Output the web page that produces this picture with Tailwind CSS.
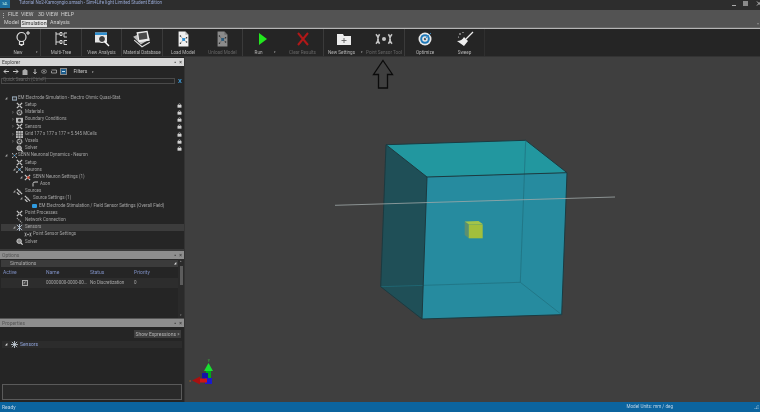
<!DOCTYPE html>
<html lang="en">
<head>
  <meta charset="UTF-8" />
  <title>Sim4Life</title>
  <script src="https://cdn.jsdelivr.net/npm/@tailwindcss/browser@4"></script>
</head>
<body class="w-[760px] h-[412px] overflow-hidden bg-[#3f3f3f] font-['Roboto',sans-serif] text-[5px] leading-none text-[#a9a9a9]">
  <svg class="absolute w-0 h-0">
    <defs>
      <symbol id="cross" viewBox="0 0 8 8"><path d="M1 1l6 6M7 1L1 7" stroke="#c8c8c8" stroke-width="1.500" fill="none"/><circle cx="4" cy="4" r="1" fill="#777"/></symbol>
      <symbol id="gear" viewBox="0 0 8 8"><circle cx="4" cy="4" r="2.600" fill="none" stroke="#c4c4c4" stroke-width="1.600" stroke-dasharray="1.300 .5"/><circle cx="4" cy="4" r="1" fill="#777"/></symbol>
      <symbol id="net" viewBox="0 0 8 8"><path d="M1 1l3 3 3-3M1 7l3-3 3 3" stroke="#bbb" stroke-width=".7" fill="none"/><circle cx="4" cy="4" r="1.200" fill="#4a9fd8"/><circle cx="1" cy="1" r=".9" fill="#ccc"/><circle cx="7" cy="1" r=".9" fill="#ccc"/><circle cx="1" cy="7" r=".9" fill="#ccc"/><circle cx="7" cy="7" r=".9" fill="#ccc"/></symbol>
      <symbol id="solver" viewBox="0 0 8 8"><circle cx="3.600" cy="3.600" r="2.600" fill="#8a8a8a" stroke="#ddd" stroke-width=".9"/><path d="M5.400 5.400L7.600 7.600" stroke="#ddd" stroke-width="1.300"/></symbol>
      <symbol id="lock" viewBox="0 0 6 6"><rect x=".6" y="2.200" width="4.800" height="3.400" fill="#d2d2d2"/><path d="M1.800 2.200V1.400Q3 .1 4.200 1.400V2.200" stroke="#d2d2d2" stroke-width=".7" fill="none"/></symbol>
      <symbol id="sensor" viewBox="0 0 10 6"><path d="M1 .6Q3.200 3 1 5.400M2.800 .6Q1 3 2.800 5.400M9 .6Q6.800 3 9 5.400M7.200 .6Q9 3 7.200 5.400" stroke="#c4c4c4" stroke-width=".8" fill="none"/><circle cx="5" cy="3" r="1" fill="#c4c4c4"/></symbol>
      <symbol id="model" viewBox="0 0 20 26"><path d="M2 1h11l5 5v19H2z" fill="#f1f1f1"/><path d="M13 1v5h5" fill="#b5b5b5"/><path d="M5 8l5 6 5-3M5 20l5-6 5 4" stroke="#777" stroke-width=".8" fill="none"/><rect x="8" y="11.500" width="4.500" height="4.500" fill="#2a8fd4"/><circle cx="5" cy="8" r="1.200" fill="#333"/><circle cx="15" cy="11" r="1.200" fill="#333"/><circle cx="5" cy="20" r="1.200" fill="#333"/><circle cx="15" cy="18" r="1.200" fill="#333"/></symbol>
    </defs>
  </svg>

  <div class="flex flex-col h-full">
    <!-- title bar -->
    <div class="flex h-[10px] bg-[#2d2d2d] text-[#97a8d4] shrink-0 blur-[0.25px]">
      <div class="w-[10px] h-[8px] bg-[#1d6f9f] text-[3px] text-[#cfe] flex items-center justify-center">S4L</div>
      <span class="ml-[9px] mt-[1px] text-[4.550px] whitespace-nowrap">Tutorial No2-Kamoyngio.smash - Sim4Life light Limited Student Edition</span>
      <div class="ml-auto flex items-start">
        <div class="w-[4px] h-[1px] bg-[#aaa] mt-[5px]"></div>
        <div class="ml-[7px] mt-[1px] w-[5px] h-[5px] bg-[#8a8a8a]"></div>
        <svg class="ml-[8px] mt-[1px]" width="4" height="5" viewBox="0 0 4 5"><path d="M1 0.500l4 4M5 .5l-4 4" stroke="#bbb"/></svg>
      </div>
    </div>

    <!-- menu + tabs -->
    <div class="h-[18px] bg-[#535353] flex flex-col shrink-0 blur-[0.25px]">
      <div class="flex items-center h-[10px] text-[#d0d0d0] text-[5.300px]">
        <div class="ml-[3px] w-[1px] h-[5px] border-l border-dotted border-[#aaa]"></div>
        <span class="ml-[4px] w-[13px]">FILE</span><span class="w-[17px]">VIEW</span><span class="w-[23px]">3D VIEW</span><span>HELP</span>
      </div>
      <div class="flex items-end h-[8px] text-[5.300px] text-[#cfcfcf] border-b border-[#666]">
        <span class="ml-[4px] w-[17px] pb-[2px]">Model</span>
        <span class="w-[26px] h-[7px] bg-[#e2e2e2] text-[#333] flex items-center justify-center">Simulation</span>
        <span class="ml-[3px] pb-[2px]">Analysis</span>
        <span class="ml-auto mr-[1px] pb-[1px] text-[3.500px] text-[#888]">▾</span>
      </div>
    </div>
    <div class="h-[1px] bg-[#b5b5b5] shrink-0"></div>

    <!-- ribbon -->
    <div class="flex h-[28px] bg-[#252525] border-b border-[#333] text-[4.600px] text-[#b5b5b5] shrink-0 blur-[0.25px]">
      <div class="w-[41px] border-r border-[#3a3a3a] flex flex-col items-center relative">
        <svg class="h-[16px] mt-[2px] ml-[5px]" width="16" viewBox="0 0 16 16"><circle cx="6.500" cy="6" r="4.500" fill="none" stroke="#ddd" stroke-width="1.200"/><path d="M4.500 10.500h4v3h-4zM5.500 14.500h2" stroke="#ddd" stroke-width="1.200" fill="none"/><path d="M13 0v4M11 2h4" stroke="#eee" stroke-width="1"/></svg>
        <span class="mt-[4px] mr-[4px]">New</span>
        <span class="absolute right-[2px] bottom-[2px] text-[3px]">▾</span>
      </div>
      <div class="w-[41px] border-r border-[#3a3a3a] flex flex-col items-center">
        <svg class="h-[16px] mt-[2px]" width="18" viewBox="0 0 16 16"><path d="M3 1v13M3 3h4M3 11h4M7 1.500h2v3H7zM7 9.500h2v3H7zM11 2v4M14 2h-3M14 6h-3M11 9.500v4M14 9.500h-3M14 13.500h-3" stroke="#d8d8d8" stroke-width="1" fill="none"/></svg>
        <span class="mt-[4px]">Multi-Tree</span>
      </div>
      <div class="w-[40px] border-r border-[#3a3a3a] flex flex-col items-center">
        <svg class="h-[16px] mt-[2px]" width="16" viewBox="0 0 16 16"><rect x="1" y="1.500" width="12" height="10" fill="#e6e6e6"/><rect x="1" y="1.500" width="12" height="2.500" fill="#2f8fd0"/><circle cx="8" cy="8" r="3.500" fill="#3c3c3c" stroke="#fff" stroke-width="1"/><path d="M10.500 10.500L15 15" stroke="#fff" stroke-width="1.400"/></svg>
        <span class="mt-[4px]">View Analysis</span>
      </div>
      <div class="w-[41px] border-r border-[#3a3a3a] flex flex-col items-center">
        <svg class="h-[18px] mt-[1px]" width="20" viewBox="0 0 18 16"><path d="M1 6l9-4 6 6-8 5z" fill="#bcbcbc"/><path d="M4 2l10-1.500 2 9L6 11z" fill="#ececec"/><rect x="6" y="2.500" width="7.500" height="6" transform="rotate(-8 9 5)" fill="#4a4a4a"/><path d="M2 9l7 6 7-4" stroke="#ddd" fill="none"/></svg>
        <span class="mt-[3px] whitespace-nowrap">Material Database</span>
      </div>
      <div class="w-[40px] flex flex-col items-center">
        <svg class="h-[16px] mt-[2px]" width="13"><use href="#model"/></svg>
        <span class="mt-[4px]">Load Model</span>
      </div>
      <div class="w-[40px] border-r border-[#3a3a3a] flex flex-col items-center text-[#666]">
        <svg class="h-[16px] mt-[2px] opacity-50" width="13"><use href="#model"/></svg>
        <span class="mt-[4px]">Unload Model</span>
      </div>
      <div class="w-[39px] flex flex-col items-center relative">
        <svg class="h-[16px] mt-[2px]" width="10" viewBox="0 0 10 16"><path d="M1 2l8 6-8 6z" fill="#22e81e"/></svg>
        <span class="mt-[4px] mr-[8px]">Run</span>
        <span class="absolute right-[6px] bottom-[2px] text-[3px]">▾</span>
      </div>
      <div class="w-[42px] border-r border-[#3a3a3a] flex flex-col items-center text-[#666]">
        <svg class="h-[16px] mt-[2px]" width="14" viewBox="0 0 14 16"><path d="M2 2l10 12M12 2L2 14" stroke="#b01818" stroke-width="2"/></svg>
        <span class="mt-[4px]">Clear Results</span>
      </div>
      <div class="w-[40px] flex flex-col items-center relative">
        <svg class="h-[16px] mt-[2px]" width="16" viewBox="0 0 16 16"><path d="M1 3h6l1 2h7v9H1z" fill="#ececec"/><path d="M8 7v5M5.500 9.500h5" stroke="#555" stroke-width=".8"/></svg>
        <span class="mt-[4px] mr-[5px] whitespace-nowrap">New Settings</span>
        <span class="absolute right-[1px] bottom-[2px] text-[3px]">▾</span>
      </div>
      <div class="w-[41px] border-r border-[#3a3a3a] flex flex-col items-center text-[#666]">
        <svg class="h-[16px] mt-[2px]" width="20"><use href="#sensor"/></svg>
        <span class="mt-[4px] whitespace-nowrap">Point Sensor Tool</span>
      </div>
      <div class="w-[40px] flex flex-col items-center">
        <svg class="h-[16px] mt-[2px]" width="16" viewBox="0 0 16 16"><circle cx="8" cy="8" r="6.500" fill="#e8e8e8"/><circle cx="8" cy="8" r="4.800" fill="#1f79b8"/><circle cx="8" cy="8" r="2.800" fill="#e8e8e8"/><circle cx="8" cy="8" r="1.200" fill="#555"/><path d="M8 8l6-6" stroke="#3b8fc9" stroke-width=".9"/></svg>
        <span class="mt-[4px]">Optimize</span>
      </div>
      <div class="w-[40px] border-r border-[#2f2f2f] flex flex-col items-center">
        <svg class="h-[16px] mt-[2px]" width="18" viewBox="0 0 18 16"><path d="M17 1L10 8" stroke="#eee" stroke-width="1.200"/><path d="M8 6l4 4-4 5-7-5q5 0 7-4z" fill="#efefef"/><circle cx="4" cy="3" r=".8" fill="#ddd"/><circle cx="7" cy="1.500" r=".6" fill="#ddd"/><circle cx="2.500" cy="6" r=".6" fill="#ddd"/></svg>
        <span class="mt-[4px]">Sweep</span>
      </div>
    </div>

    <!-- main -->
    <div class="flex flex-1 min-h-0">
      <div class="w-[184px] flex flex-col bg-[#252525] pt-[1px] blur-[0.25px]">
        <!-- explorer -->
        <div class="h-[192px] flex flex-col">
          <div class="h-[8px] bg-[#d7d7d7] text-[#444] flex items-center pl-[2px] justify-between pr-[2px] shrink-0">
            <span>Explorer</span>
            <span class="flex gap-[3px] text-[#555]"><span>▪</span><span class="font-bold">×</span></span>
          </div>
          <div class="h-[11px] flex items-center pl-[3px] gap-[3.500px] text-[#c8c8c8] shrink-0">
            <svg width="6" height="5" viewBox="0 0 6 5"><path d="M6 2.500H1M3 .5L1 2.500l2 2" stroke="#c8c8c8" fill="none"/></svg>
            <svg width="6" height="5" viewBox="0 0 6 5"><path d="M0 2.500h5M3 .5l2 2-2 2" stroke="#c8c8c8" fill="none"/></svg>
            <svg width="6" height="6" viewBox="0 0 6 6"><path d="M.5 1.500L3 0l2.500 1.500V6h-5z" fill="#aaa"/></svg>
            <svg width="6" height="6" viewBox="0 0 6 6"><path d="M3 0v4M1.500 3L3 5l1.500-2" stroke="#bbb" fill="none"/></svg>
            <svg width="6" height="5" viewBox="0 0 6 5"><ellipse cx="3" cy="2.500" rx="2.700" ry="1.700" fill="none" stroke="#aaa" stroke-width=".7"/><circle cx="3" cy="2.500" r=".8" fill="#aaa"/></svg>
            <svg width="6" height="5" viewBox="0 0 6 5"><path d="M.5 1h5v3h-5V2" stroke="#bbb" stroke-width=".7" fill="none"/></svg>
            <div class="w-[7px] h-[7px] border border-[#888] bg-[#1d5c8c] flex items-center justify-center"><div class="w-[3px] h-[1px] bg-[#bde]"></div></div>
            <span class="ml-[3px]">Filters</span>
            <span class="ml-[1px] text-[3px] mt-[2px]">▾</span>
          </div>
          <div class="flex items-center h-[7px] shrink-0">
            <div class="ml-[1px] w-[174px] h-[6px] border border-[#4a4a4a] text-[#666] flex items-center pl-[1px] text-[4.600px]">Quick Search (Ctrl+F)</div>
            <span class="ml-[3px] text-[#3d9bd9] font-bold text-[6px]">X</span>
          </div>

          <div class="pt-[10.500px] text-[#a4a4a4] text-[4.500px] whitespace-nowrap">
            <div class="flex items-center h-[7.200px]"><span class="w-[12px] pl-[5px] text-[3px]">◢</span><svg width="5" height="5" viewBox="0 0 6 5"><rect width="6" height="5" fill="#9fb2c4"/><rect x="1" y="1.200" width="4" height="2.600" fill="#333"/></svg><span class="ml-[1px]">EM Electrode Simulation - Electro Ohmic Quasi-Stat.</span></div>
            <div class="flex items-center h-[7.200px] pr-[2px]"><svg class="ml-[16px]" width="7" height="7"><use href="#cross"/></svg><span class="ml-[2px]">Setup</span><svg class="ml-auto" width="5" height="5"><use href="#lock"/></svg></div>
            <div class="flex items-center h-[7.200px] pr-[2px]"><span class="ml-[12px] w-[4px] text-[3px]">▷</span><svg width="7" height="7"><use href="#gear"/></svg><span class="ml-[2px]">Materials</span><svg class="ml-auto" width="5" height="5"><use href="#lock"/></svg></div>
            <div class="flex items-center h-[7.200px] pr-[2px]"><span class="ml-[12px] w-[4px] text-[3px]">▷</span><svg width="7" height="6" viewBox="0 0 7 6"><rect y=".8" width="7" height="5" fill="#bbb"/><circle cx="3.500" cy="3.300" r="1.500" fill="#333"/></svg><span class="ml-[2px]">Boundary Conditions</span><svg class="ml-auto" width="5" height="5"><use href="#lock"/></svg></div>
            <div class="flex items-center h-[7.200px] pr-[2px]"><span class="ml-[12px] w-[4px] text-[3px]">▷</span><svg width="7" height="7"><use href="#cross"/></svg><span class="ml-[2px]">Sensors</span><svg class="ml-auto" width="5" height="5"><use href="#lock"/></svg></div>
            <div class="flex items-center h-[7.200px] pr-[2px]"><span class="ml-[12px] w-[4px] text-[3px]">▷</span><svg width="7" height="7" viewBox="0 0 7 7"><path d="M0 0h7v7H0z" fill="#bbb"/><path d="M2.300 0v7M4.700 0v7M0 2.300h7M0 4.700h7" stroke="#333" stroke-width=".5"/></svg><span class="ml-[2px]">Grid 177 x 177 x 177 = 5.545 MCells</span><svg class="ml-auto" width="5" height="5"><use href="#lock"/></svg></div>
            <div class="flex items-center h-[7.200px] pr-[2px]"><span class="ml-[12px] w-[4px] text-[3px]">▷</span><svg width="7" height="7"><use href="#gear"/></svg><span class="ml-[2px]">Voxels</span><svg class="ml-auto" width="5" height="5"><use href="#lock"/></svg></div>
            <div class="flex items-center h-[7.200px] pr-[2px]"><svg class="ml-[16px]" width="7" height="7"><use href="#solver"/></svg><span class="ml-[2px]">Solver</span><svg class="ml-auto" width="5" height="5"><use href="#lock"/></svg></div>
            <div class="flex items-center h-[7.200px]"><span class="w-[12px] pl-[5px] text-[3px]">◢</span><svg width="5" height="5"><use href="#net"/></svg><span class="ml-[1px]">SENN Neuronal Dynamics - Neuron</span></div>
            <div class="flex items-center h-[7.200px]"><svg class="ml-[16px]" width="7" height="7"><use href="#cross"/></svg><span class="ml-[2px]">Setup</span></div>
            <div class="flex items-center h-[7.200px]"><span class="ml-[13px] w-[3px] text-[3px]">◢</span><svg width="7" height="7"><use href="#net"/></svg><span class="ml-[2px]">Neurons</span></div>
            <div class="flex items-center h-[7.200px]"><span class="ml-[20px] w-[4px] text-[3px]">◢</span><svg width="7" height="7" viewBox="0 0 8 8"><path d="M1 1l6 6M7 1L1 7" stroke="#ccc" stroke-width="1.300"/><circle cx="5" cy="4" r="1.500" fill="#d24a34"/></svg><span class="ml-[2px]">SENN Neuron Settings (1)</span></div>
            <div class="flex items-center h-[7.200px]"><svg class="ml-[32px]" width="7" height="6" viewBox="0 0 7 6"><path d="M1 5.500V2.500Q1 1 3 1h3" stroke="#ccc" fill="none"/></svg><span class="ml-[1px]">Axon</span></div>
            <div class="flex items-center h-[7.200px]"><span class="ml-[13px] w-[3px] text-[3px]">◢</span><svg width="7" height="7" viewBox="0 0 8 8"><path d="M1 1l6 6M1 5l3 3" stroke="#ccc" stroke-width="1.300"/><circle cx="4" cy="4" r="1.200" fill="#999"/></svg><span class="ml-[2px]">Sources</span></div>
            <div class="flex items-center h-[7.200px]"><span class="ml-[20px] w-[4px] text-[3px]">◢</span><svg width="7" height="7" viewBox="0 0 8 8"><path d="M1 1l6 6M1 5l3 3" stroke="#ccc" stroke-width="1.300"/><circle cx="4" cy="4" r="1.200" fill="#999"/></svg><span class="ml-[2px]">Source Settings (1)</span></div>
            <div class="flex items-center h-[7.200px]"><div class="ml-[32px] w-[5px] h-[3.500px] rounded-[1px] bg-[#2f9be0]"></div><span class="ml-[2px]">EM Electrode Stimulation / Field Sensor Settings (Overall Field)</span></div>
            <div class="flex items-center h-[7.200px]"><svg class="ml-[16px]" width="7" height="7"><use href="#cross"/></svg><span class="ml-[2px]">Point Processes</span></div>
            <div class="flex items-center h-[7.200px]"><svg class="ml-[16px]" width="7" height="7" viewBox="0 0 8 8"><path d="M1 1l6 6" stroke="#aaa" stroke-width="1.200" stroke-dasharray="1.500 1"/></svg><span class="ml-[2px]">Network Connection</span></div>
            <div class="flex items-center h-[7.200px] ml-[1px] bg-[#3c3c3c]"><span class="ml-[12px] w-[3px] text-[3px]">◢</span><svg width="7" height="7" viewBox="0 0 8 8"><path d="M1 1l6 6M7 1L1 7M4 0v8" stroke="#b9c6d6" stroke-width="1"/></svg><span class="ml-[2px]">Sensors</span></div>
            <div class="flex items-center h-[7.200px]"><svg class="ml-[24px]" width="8" height="5"><use href="#sensor"/></svg><span class="ml-[1px]">Point Sensor Settings</span></div>
            <div class="flex items-center h-[7.200px]"><svg class="ml-[16px]" width="7" height="7"><use href="#solver"/></svg><span class="ml-[2px]">Solver</span></div>
          </div>
        </div>

        <!-- options -->
        <div class="h-[69px] flex flex-col border-t-2 border-[#3a3a3a] -mt-[1px]">
          <div class="h-[8px] bg-[#8e8e8e] text-[#555] flex items-center pl-[2px] justify-between pr-[2px] shrink-0">
            <span>Options</span>
            <span class="flex gap-[3px] text-[#444]"><span>▪</span><span class="font-bold">×</span></span>
          </div>
          <div class="flex flex-1 min-h-0">
            <div class="flex-1 pl-[1px] pt-[1px]">
              <div class="h-[7px] bg-[#3b3b3b] flex items-center pl-[9px] text-[#aaa] justify-between pr-[2px]"><span>Simulations</span><span class="text-[3px] text-[#ddd]">◢</span></div>
              <div class="grid grid-cols-[43px_44px_44px_1fr] pl-[2px] h-[11px] items-center text-[#7f90c4]">
                <span>Active</span><span>Name</span><span>Status</span><span>Priority</span>
              </div>
              <div class="grid grid-cols-[43px_44px_44px_1fr] pl-[2px] h-[10px] items-center bg-[#2d2d2d] whitespace-nowrap text-[4.500px]">
                <div class="flex justify-center"><div class="w-[6px] h-[6px] border border-[#aaa] bg-[#444] text-[#ddd] flex items-center justify-center text-[4px]">✓</div></div>
                <span>00000000-0000-00...</span><span>No Discretization</span><span>0</span>
              </div>
            </div>
            <div class="w-[6px] bg-[#2a2a2a] pt-[1px] flex flex-col items-center">
              <span class="h-[6px] text-[3px] text-[#888]">▴</span>
              <div class="w-[3px] h-[19px] bg-[#5c5c5c]"></div>
              <span class="mt-auto pb-[1px] text-[3px] text-[#888]">▾</span>
            </div>
          </div>
        </div>

        <!-- properties -->
        <div class="flex-1 flex flex-col min-h-0 border-t border-[#555]">
          <div class="h-[8px] bg-[#8e8e8e] text-[#555] flex items-center pl-[2px] justify-between pr-[2px] shrink-0">
            <span>Properties</span>
            <span class="flex gap-[3px] text-[#444]"><span>▪</span><span class="font-bold">×</span></span>
          </div>
          <div class="flex justify-end pr-[3px] pt-[3px]">
            <div class="w-[47px] h-[8px] bg-[#3d3d3d] flex items-center justify-center text-[#b4b4b4] whitespace-nowrap">Show Expressions »</div>
          </div>
          <div class="mt-[3px] mx-[2px] h-[7px] bg-[#2c2c2c] flex items-center text-[#8ea2d8]">
            <span class="ml-[3px] w-[6px] text-[3px] text-[#ddd]">◢</span>
            <svg width="7" height="7" viewBox="0 0 8 8"><path d="M1 1l6 6M7 1L1 7M4 0v8M0 4h8" stroke="#cdd7e2" stroke-width=".9"/></svg>
            <span class="ml-[2px]">Sensors</span>
          </div>
          <div class="mt-auto mb-[2px] mx-[2px] h-[16px] border border-[#5a5a5a] bg-[#2a2a2a]"></div>
        </div>
      </div>

      <!-- 3D viewport -->
      <div class="relative flex-1 border-l border-[#333]">
        <svg class="absolute left-0 top-0" width="575" height="345" viewBox="185 57 575 345">
          <!-- back faces -->
          <polygon points="386,144.700 427,177 422,319 380.700,286.700" fill="#1f4f57"/>
          <polygon points="386,144.700 525.700,140.300 567,172.700 427,177" fill="#22979f"/>
          <polygon points="427,177 567,172.700 561.700,314.700 422,319" fill="#268b9f"/>
          <path d="M525.700 140.300L520.300 282.300L380.700 286.700M520.300 282.300L561.700 314.700" stroke="#1f6f7c" stroke-width=".7" fill="none"/>
          <path d="M386 144.700L525.700 140.300L567 172.700L561.700 314.700L422 319L380.700 286.700ZM427 177L567 172.700M427 177L386 144.700M427 177L422 319" stroke="#1c3a40" stroke-width="1" fill="none"/>
          <!-- wire -->
          <path d="M335 205.300L615 197" stroke="#a0a8a8" stroke-width=".8"/>
          <!-- small block -->
          <polygon points="464.700,221.500 468.700,224.300 468.700,238.300 464.700,235" fill="#5c8f70"/>
          <polygon points="464.700,221.500 478.500,221 482.700,224 468.700,224.300" fill="#a3c44a"/>
          <rect x="468.700" y="224.300" width="14" height="14" fill="#a2bf3c"/>
          <!-- arrow -->
          <path d="M383 60.500L392.500 74.500H387.500V88H378.500V74.500H373.500Z" fill="none" stroke="#0b0b0b" stroke-width="1.300"/>
          <!-- axis gizmo -->
          <rect x="206" y="370" width="5" height="8" fill="#00a81c"/>
          <path d="M208.500 363L213 371H204Z" fill="#18e030"/>
          <rect x="202" y="373" width="6" height="6" fill="#1414a8"/>
          <rect x="205" y="378" width="7" height="6" fill="#1a1ad0"/>
          <rect x="199" y="378.500" width="8" height="4" fill="#d01616"/>
          <path d="M192 380.500L200 376.500V384.500Z" fill="#a81010"/>
          <text x="208" y="361" font-size="3.500" fill="#3cc040">y</text>
          <text x="189" y="381.500" font-size="3.500" fill="#c05a20">x</text>
        </svg>
      </div>
    </div>

    <!-- status bar -->
    <div class="h-[10px] bg-[#0b649f] flex items-center pl-[2px] text-[#c0d4e4] shrink-0 blur-[0.25px]">
      <span>Ready</span>
      <span class="ml-auto mr-[80px] text-[4.600px]">Model Units: mm / deg</span>
      <svg class="mr-[1px]" width="6" height="6" viewBox="0 0 6 6"><path d="M5 1v1M3.500 2.500v1M5 2.500v1M2 4v1M3.500 4v1M5 4v1" stroke="#9fc3dc" stroke-width=".8"/></svg>
    </div>
  </div>
</body>
</html>
